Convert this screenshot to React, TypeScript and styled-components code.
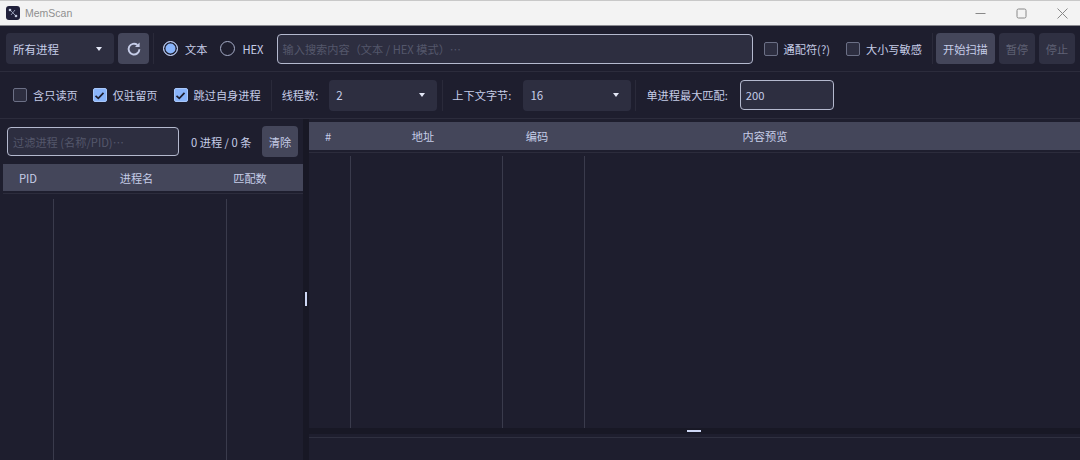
import * as React from "react";
import styled, {createGlobalStyle} from "styled-components";

const GlobalStyle = createGlobalStyle`
  html, body {
    margin: 0;
    padding: 0;
    background: #1e1e2e;
  }
  body {
    font-family: "Noto Sans CJK SC", "Noto Sans", sans-serif;
    font-size: 11.2px;
    color: #c6cde8;
  }
`;

const Window = styled.div`
  width: 1080px;
  height: 460px;
  display: flex;
  flex-direction: column;
  overflow: hidden;
  background: #1e1e2e;
`;

const TitleBar = styled.div`
  height: 26px;
  flex: none;
  display: flex;
  align-items: center;
  box-sizing: border-box;
  padding-left: 6px;
  background: #f3f3f3;
  border-top: 1px solid #c8c8c8;
  border-bottom: 1px solid #8a8a90;
`;

const AppName = styled.span`
  margin-left: 5px;
  font-family: "Liberation Sans", sans-serif;
  font-size: 10.5px;
  color: #8f8f8f;
`;

const WindowButtons = styled.div`
  margin-left: auto;
  display: flex;
  gap: 5px;
`;

const WindowButton = styled.div`
  width: 36px;
  height: 24px;
  display: flex;
  align-items: center;
  justify-content: center;
  color: #888;
`;

const Toolbar = styled.div<{$height: number; $pad: number}>`
  height: ${p => p.$height}px;
  flex: none;
  display: flex;
  align-items: center;
  padding-left: ${p => p.$pad}px;
  box-sizing: border-box;
  border-bottom: 1px solid #2c2c3c;
`;

const Select = styled.div<{$width: number}>`
  width: ${p => p.$width}px;
  height: 31px;
  flex: none;
  box-sizing: border-box;
  padding: 0 12px 0 7px;
  display: flex;
  align-items: center;
  justify-content: space-between;
  border-radius: 4px;
  background: #2d2e40;
  font-size: 11.5px;
`;

const Caret = styled.i`
  width: 0;
  height: 0;
  border-left: 3px solid transparent;
  border-right: 3px solid transparent;
  border-top: 4px solid #e4e8f6;
`;

const Button = styled.button<{$width: number; $tone?: "normal" | "off"}>`
  width: ${p => p.$width}px;
  height: 31px;
  flex: none;
  padding: 0;
  display: flex;
  align-items: center;
  justify-content: center;
  border: 0;
  border-radius: 4px;
  font: inherit;
  background: ${p => p.$tone === "off" ? "#2f3042" : "#44465a"};
  color: ${p => p.$tone === "off" ? "#5f6275" : "#c6cde8"};
`;

const Sep = styled.div<{$left: number; $right: number}>`
  width: 1px;
  height: 31px;
  flex: none;
  margin: 0 ${p => p.$right}px 0 ${p => p.$left}px;
  background: #2a2a3a;
`;

const Radio = styled.span<{$on?: boolean}>`
  width: 15px;
  height: 15px;
  flex: none;
  box-sizing: border-box;
  border-radius: 50%;
  border: 1px solid ${p => p.$on ? "#cdd6f4" : "#a6adc8"};
  background: ${p => p.$on ? "#89b4fa" : "#1e1e2e"};
  box-shadow: ${p => p.$on ? "inset 0 0 0 1.5px #1e1e2e" : "none"};
`;

const Option = styled.label<{$gap: number; $after: number}>`
  display: flex;
  align-items: center;
  flex: none;
  gap: ${p => p.$gap}px;
  margin-right: ${p => p.$after}px;
  white-space: nowrap;
`;

const Check = styled.span<{$on?: boolean}>`
  width: 14px;
  height: 14px;
  flex: none;
  box-sizing: border-box;
  display: flex;
  align-items: center;
  justify-content: center;
  border-radius: 2px;
  border: 1px solid ${p => p.$on ? "#a9c8fb" : "#6c7086"};
  background: ${p => p.$on ? "#89b4fa" : "#2d2e40"};
  color: #1e1e2e;
`;

const Field = styled.div<{$width: number; $height: number}>`
  width: ${p => p.$width}px;
  height: ${p => p.$height}px;
  flex: none;
  box-sizing: border-box;
  display: flex;
  align-items: center;
  padding-left: 5px;
  border: 1px solid #b4b9ce;
  border-radius: 4px;
  background: #2d2e40;
  white-space: nowrap;
`;

const Placeholder = styled.span`
  color: #54576b;
`;

const Label = styled.span<{$after: number}>`
  flex: none;
  margin-right: ${p => p.$after}px;
  white-space: nowrap;
`;

const Main = styled.div`
  flex: 1;
  min-height: 0;
  display: flex;
`;

const LeftPane = styled.div`
  width: 303px;
  flex: none;
  display: flex;
  flex-direction: column;
`;

const FilterRow = styled.div`
  height: 45px;
  flex: none;
  display: flex;
  align-items: center;
  box-sizing: border-box;
  padding: 0 0 0 7px;
`;

const Counter = styled.span`
  margin: 0 11px 0 12px;
  width: 60px;
  flex: none;
  white-space: nowrap;
`;

const HSplit = styled.div`
  width: 6px;
  flex: none;
  display: flex;
  align-items: center;
  justify-content: center;
  background: #181825;
`;

const HHandle = styled.div`
  width: 2px;
  height: 14px;
  margin-top: 19px;
  background: #cdd6f4;
`;

const RightPane = styled.div`
  flex: 1;
  min-width: 0;
  display: flex;
  flex-direction: column;
`;

const TableWrap = styled.div<{$top: number; $left: number}>`
  flex: 1;
  min-height: 0;
  margin-top: ${p => p.$top}px;
  margin-left: ${p => p.$left}px;
  display: flex;
  flex-direction: column;
`;

const HeaderRow = styled.div<{$cols: string; $height: number}>`
  height: ${p => p.$height}px;
  flex: none;
  display: grid;
  grid-template-columns: ${p => p.$cols};
  align-items: center;
  background: #44465a;
  text-align: center;
`;

const BodyRow = styled.div<{$cols: string; $top: number}>`
  flex: 1;
  min-height: 0;
  display: grid;
  grid-template-columns: ${p => p.$cols};
  margin-top: 2px;
  padding-top: ${p => p.$top}px;
  border-top: 1px solid #2c2c3c;
`;

const BodyCell = styled.div`
  border-right: 1px solid #3a3b4c;
  &:last-child {
    border-right: 0;
  }
`;

const VSplit = styled.div`
  height: 6px;
  flex: none;
  display: flex;
  align-items: center;
  justify-content: center;
  background: #181825;
`;

const VHandle = styled.div`
  width: 14px;
  height: 2px;
  margin-left: -2px;
  background: #cdd6f4;
`;

const LogArea = styled.div`
  height: 26px;
  flex: none;
  box-sizing: border-box;
  padding-top: 3px;
`;

const LogLine = styled.div`
  height: 1px;
  background: #2f3040;
`;

const processHeadCols = "50px 167px 60px 1fr";
const processBodyCols = "51px 173px 1fr";
const hitHeadCols = "38px 152px 76px 380px 1fr";
const hitBodyCols = "42px 152px 82px 1fr";

const AppIcon = () => (
  <svg width="14" height="14" viewBox="0 0 14 14">
    <rect width="14" height="14" rx="3" fill="#20203a" />
    <path d="M4 4 L10 10 M9 4 L5 9" stroke="#aab2cc" strokeWidth="0.8" />
    <circle cx="4" cy="4" r="1.3" fill="#c4cbe0" />
    <circle cx="10" cy="10" r="1.3" fill="#c4cbe0" />
  </svg>
);

const CheckMark = () => (
  <svg width="11" height="11" viewBox="0 0 11 11" fill="none" stroke="currentColor" strokeWidth="1.7">
    <path d="M1.5 5.8 L4.3 8.4 L9.5 2.8" />
  </svg>
);

const Refresh = () => (
  <svg width="16" height="16" viewBox="0 0 16 16" fill="none" stroke="#c6cde8" strokeWidth="1.9">
    <path d="M13.4 8.2 A5.4 5.4 0 1 1 11.4 3.9" />
    <path d="M13.6 1.4 V6 H9" fill="#c6cde8" stroke="none" />
  </svg>
);

export default function App() {
  return <Window>
    <GlobalStyle />
    <TitleBar>
      <AppIcon />
      <AppName>MemScan</AppName>
      <WindowButtons>
        <WindowButton>
          <svg width="11" height="11" viewBox="0 0 11 11"><path d="M0.5 5.5 H10.5" stroke="currentColor" /></svg>
        </WindowButton>
        <WindowButton>
          <svg width="11" height="11" viewBox="0 0 11 11" fill="none"><rect x="1" y="1" width="9" height="9" rx="1.5" stroke="currentColor" /></svg>
        </WindowButton>
        <WindowButton>
          <svg width="11" height="11" viewBox="0 0 11 11"><path d="M0.5 0.5 L10.5 10.5 M10.5 0.5 L0.5 10.5" stroke="currentColor" /></svg>
        </WindowButton>
      </WindowButtons>
    </TitleBar>

    <Toolbar $height={46} $pad={6}>
      <Select $width={108}>所有进程<Caret /></Select>
      <Button $width={31} style={{marginLeft: 4}}><Refresh /></Button>
      <Sep $left={4} $right={9} />
      <Option $gap={7} $after={13}><Radio $on />文本</Option>
      <Option $gap={7} $after={13}><Radio />HEX</Option>
      <Field $width={476} $height={30}><Placeholder>输入搜索内容（文本 / HEX 模式）…</Placeholder></Field>
      <Option $gap={6} $after={16} style={{marginLeft: 11}}><Check />通配符(?)</Option>
      <Option $gap={6} $after={10}><Check />大小写敏感</Option>
      <Sep $left={0} $right={3} />
      <Button $width={59}>开始扫描</Button>
      <Button $width={36} $tone="off" style={{marginLeft: 4}}>暂停</Button>
      <Button $width={36} $tone="off" style={{marginLeft: 4}}>停止</Button>
    </Toolbar>

    <Toolbar $height={47} $pad={13}>
      <Option $gap={6} $after={15}><Check />含只读页</Option>
      <Option $gap={6} $after={16}><Check $on><CheckMark /></Check>仅驻留页</Option>
      <Option $gap={6} $after={10}><Check $on><CheckMark /></Check>跳过自身进程</Option>
      <Sep $left={0} $right={10} />
      <Label $after={11}>线程数:</Label>
      <Select $width={108}>2<Caret /></Select>
      <Sep $left={5} $right={9} />
      <Label $after={12}>上下文字节:</Label>
      <Select $width={108}>16<Caret /></Select>
      <Sep $left={4} $right={10} />
      <Label $after={12}>单进程最大匹配:</Label>
      <Field $width={94} $height={30}>200</Field>
    </Toolbar>

    <Main>
      <LeftPane>
        <FilterRow>
          <Field $width={172} $height={29}><Placeholder>过滤进程 (名称/PID)…</Placeholder></Field>
          <Counter>0 进程 / 0 条</Counter>
          <Button $width={36}>清除</Button>
        </FilterRow>
        <TableWrap $top={0} $left={3}>
          <HeaderRow $cols={processHeadCols} $height={27}>
            <span>PID</span><span>进程名</span><span>匹配数</span><span />
          </HeaderRow>
          <BodyRow $cols={processBodyCols} $top={5}>
            <BodyCell /><BodyCell /><BodyCell />
          </BodyRow>
        </TableWrap>
      </LeftPane>
      <HSplit><HHandle /></HSplit>
      <RightPane>
        <TableWrap $top={3} $left={0}>
          <HeaderRow $cols={hitHeadCols} $height={28}>
            <span>#</span><span>地址</span><span>编码</span><span>内容预览</span><span />
          </HeaderRow>
          <BodyRow $cols={hitBodyCols} $top={3}>
            <BodyCell /><BodyCell /><BodyCell /><BodyCell />
          </BodyRow>
        </TableWrap>
        <VSplit><VHandle /></VSplit>
        <LogArea><LogLine /></LogArea>
      </RightPane>
    </Main>
  </Window>;
}
